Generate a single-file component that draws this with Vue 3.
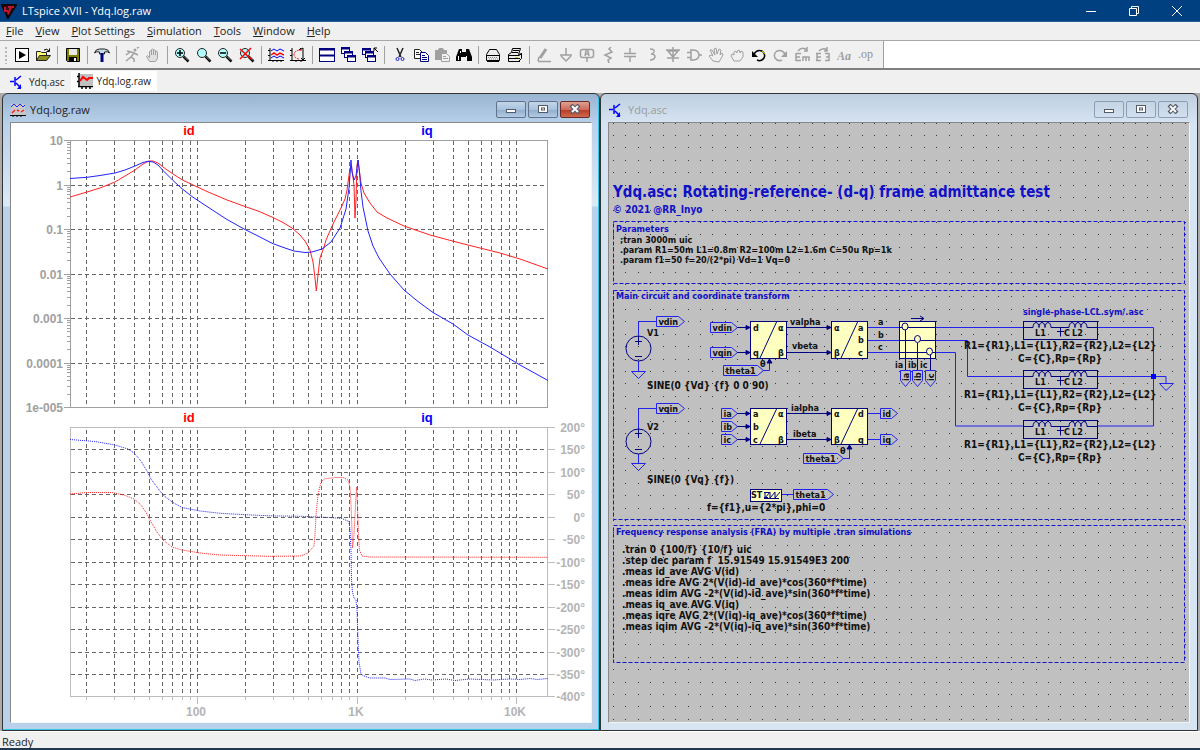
<template>
  <div class="app">
    <header class="titlebar">
      <svg class="logo" width="16" height="16" viewBox="0 0 16 16">
        <path d="M1 2h14l-8 13z" fill="#3a0b12" />
        <path d="M1 2h14l-8 13z" fill="none" stroke="#120608" stroke-width="2" />
        <path d="M4 4v4h3M7 4h6M10 4l-3 7" fill="none" stroke="#c0142c" stroke-width="2" />
      </svg>
      <h1>LTspice XVII - Ydq.log.raw</h1>
      <div class="sysBtns">
        <button aria-label="Minimize"><svg width="12" height="12"><path d="M1 6.5h10" /></svg></button>
        <button aria-label="Restore"><svg width="12" height="12"><path d="M1.5 3.5h7v7h-7zM3.5 3v-1.5h7v7h-1.5" /></svg></button>
        <button aria-label="Close"><svg width="12" height="12"><path d="M1 1l10 10M11 1l-10 10" /></svg></button>
      </div>
    </header>

    <nav class="menu">
      <button v-for="m in menus" :key="m"><u>{{ m[0] }}</u>{{ m.slice(1) }}</button>
    </nav>

    <div class="toolbarRow">
      <div class="toolbar">
        <template v-for="(group, gi) in toolGroups" :key="gi">
          <span v-if="gi" class="sep"></span>
          <button v-for="t in group" :key="t" :aria-label="t">
            <svg width="16" height="16" viewBox="0 0 16 16" fill="none" v-html="icons[t]"></svg>
          </button>
        </template>
      </div>
    </div>

    <div class="tabs">
      <button class="tab">
        <svg width="16" height="16" viewBox="0 0 16 16" fill="none" v-html="icons.transistor"></svg>Ydq.asc
      </button>
      <button class="tab active">
        <svg width="16" height="16" viewBox="0 0 16 16" fill="none" v-html="icons.wave"></svg>Ydq.log.raw
      </button>
    </div>

    <main class="mdi">
      <section class="win focused">
        <div class="winTitle">
          <svg width="16" height="16" viewBox="0 0 16 16" fill="none" v-html="icons.plot"></svg>
          <h2>Ydq.log.raw</h2>
          <div class="winBtns">
            <button v-for="b in winButtons" :key="b" :class="b" :aria-label="b">
              <svg width="12" height="10" viewBox="0 0 12 10" v-html="icons[b]"></svg>
            </button>
          </div>
        </div>
        <div class="client">
          <svg class="canvas plot" viewBox="11 123 580 599" preserveAspectRatio="xMinYMin meet">
            <path class="grid" :d="gridPath" />
            <path class="axis" :d="magTicks" />
            <path class="axis soft" :d="phaseTicks" />
            <rect class="axis" x="70.5" y="140.5" width="477" height="267" />
            <rect class="axis soft" x="70.5" y="427.5" width="477" height="269" />
            <g class="axisText" text-anchor="end">
              <text v-for="(l, i) in magLabels" :key="l" x="63" :y="magY(i) + 4">{{ l }}</text>
              <text v-for="(l, i) in phaseLabels" :key="l" class="softText" x="585" :y="phaseY(i) + 4">{{ l }}</text>
            </g>
            <g class="axisText softText" text-anchor="middle">
              <text x="196" y="716">100</text>
              <text x="356" y="716">1K</text>
              <text x="515" y="716">10K</text>
            </g>
            <g class="traceText" text-anchor="middle">
              <text x="189" y="135" fill="#f00">id</text>
              <text x="427" y="135" fill="#00f">iq</text>
              <text x="189" y="422" fill="#f00">id</text>
              <text x="427" y="422" fill="#00f">iq</text>
            </g>
            <polyline class="trace red" :points="magId" />
            <polyline class="trace blue" :points="magIq" />
            <polyline class="trace red dotted" :points="phaseId" />
            <polyline class="trace blue dotted" :points="phaseIq" />
          </svg>
        </div>
      </section>

      <section class="win">
        <div class="winTitle">
          <svg width="16" height="16" viewBox="0 0 16 16" fill="none" v-html="icons.transistor"></svg>
          <h2>Ydq.asc</h2>
          <div class="winBtns">
            <button v-for="b in winButtons" :key="b" :class="b" :aria-label="b">
              <svg width="12" height="10" viewBox="0 0 12 10" v-html="icons[b]"></svg>
            </button>
          </div>
        </div>
        <div class="client schematicClient">
          <svg class="canvas schematic" viewBox="609 123 580 599" preserveAspectRatio="xMinYMin meet">
            <path class="dots" :d="dotGrid" />

            <g class="frameBox">
              <rect x="613.5" y="221.5" width="571" height="62" />
              <rect x="613.5" y="290.5" width="571" height="229" />
              <rect x="613.5" y="525.5" width="571" height="137" />
            </g>

            <g class="note">
              <text class="big" x="613" y="197">Ydq.asc: Rotating-reference- (d-q) frame admittance test</text>
              <text class="mid" x="613" y="213">© 2021 @RR_Inyo</text>
              <text x="616" y="232">Parameters</text>
              <text x="616" y="299">Main circuit and coordinate transform</text>
              <text x="616" y="535">Frequency response analysis (FRA) by multiple .tran simulations</text>
              <text x="1023" y="315">single-phase-LCL.sym/.asc</text>
            </g>

            <!-- wires -->
            <path class="wire" d="M656 321.5h-17.5v14M656 408.5h-17.5v21
              M638.5 361v10M638.5 454v9M631.5 371.5h14l-7 7zM631.5 463.5h14l-7 7z
              M763 370.5h6.5v-11M843 458.5h6.5v-13
              M868 327.5h155M868 340.5h99.5v36h55.5M868 352.5h87.5v73.5h67.5
              M1098 327.5h55.5v98.5h-55.5M1098 376.5h68v7M1159.5 383.5h14l-7.5 7z
              M868 413.5h12M868 439.5h12M782 494.5h11" />
            <rect x="1151" y="374" width="5" height="5" fill="#00f" />

            <!-- symbols -->
            <g class="sym">
              <circle cx="638.5" cy="348.5" r="12.5" />
              <circle cx="638.5" cy="441.5" r="12.5" />
              <path d="M638.5 336v9M635 341.5h7M635 356.5h7M638.5 429v9M635 433.5h7M635 449.5h7" />
            </g>
            <g class="sym filled">
              <rect x="750.5" y="321.5" width="36" height="37" />
              <rect x="831.5" y="321.5" width="36" height="37" />
              <rect x="899.5" y="321.5" width="36" height="37" />
              <rect x="750.5" y="408.5" width="36" height="36" />
              <rect x="831.5" y="408.5" width="36" height="36" />
              <rect x="750.5" y="489.5" width="31" height="12" />
            </g>
            <g class="sym">
              <path d="M760 358l17-37M841 358l17-37M760 444l17-36M841 444l17-36" />
              <path d="M787 327.5h44M787 352.5h44M787 413.5h44M787 439.5h44" />
              <path d="M737 327.5h13M737 352.5h13M737 413.5h13M737 426.5h13M737 439.5h13" />
              <path d="M899 327.5h37M899 340.5h37M899 352.5h37M905.5 330v41M917.5 343v28M930.5 355v16" />
              <g fill="#ffffc0">
                <ellipse cx="905" cy="326.5" rx="3" ry="3.5" />
                <ellipse cx="917.5" cy="339" rx="3" ry="3.5" />
                <ellipse cx="929.5" cy="351.5" rx="3" ry="3.5" />
              </g>
              <path d="M911 318.5h12M920 316l4 2.5-4 2.5" />
              <path d="M764 492.5h5M764 497.5h4M765 498v-6M765 498l5-6v6l5-6v6l5-6M764 498.5h15" />
              <path d="M767 363l2.5-4 2.5 4zM847 449l2.5-4 2.5 4z" fill="#000080" />
              <path v-for="a in arrows" :key="a.join()" :d="`M${a[0] - 4} ${a[1] - 2}l4 2-4 2z`" fill="#000080" />
            </g>

            <g v-for="y in lclRows" :key="y" class="sym">
              <rect x="1023.5" :y="y - 6" width="74" height="18" />
              <path :d="`M1023 ${y}h10${coil}h18${coil}h10M1060.5 ${y}v9M1057 ${y + 4}h7`" />
            </g>
            <g v-for="y in lclRows" :key="'t' + y" class="label">
              <text x="1035" :y="y + 8">L1</text>
              <text x="1064" :y="y + 8">C</text>
              <text x="1072" :y="y + 8">L2</text>
              <text class="value" x="964" :y="y + 21">R1={R1},L1={L1},R2={R2},L2={L2}</text>
              <text class="value" x="1018" :y="y + 34">C={C},Rp={Rp}</text>
            </g>

            <!-- net flags -->
            <path v-for="(f, i) in flags" :key="i" class="wire" :d="flagPath(f)" />
            <path class="wire" d="M900.5 370.5h10v10l-5 6-5-6zM912.5 370.5h10v10l-5 6-5-6zM925.5 370.5h10v10l-5 6-5-6z" />
            <g class="label">
              <text v-for="(f, i) in flags" :key="i" :x="f.x + 2" :y="f.y + 3">{{ f.name }}</text>
              <text v-for="n in downFlags" :key="n.name" :transform="`translate(${n.x} 381) rotate(-90)`">{{ n.name }}</text>
              <text v-for="(l, i) in labels" :key="'l' + i" :x="l[0]" :y="l[1]">{{ l[2] }}</text>
              <text v-for="(p, i) in params" :key="p" x="620" :y="243 + i * 10">{{ p }}</text>
              <text v-for="v in values" :key="v[2]" class="value" :x="v[0]" :y="v[1]">{{ v[2] }}</text>
              <text v-for="(d, i) in directives" :key="d" class="value" x="622" :y="553 + i * 11">{{ d }}</text>
            </g>
          </svg>
        </div>
      </section>
    </main>

    <footer class="status">Ready</footer>
  </div>
</template>

<script setup>
const menus = ['File', 'View', 'Plot Settings', 'Simulation', 'Tools', 'Window', 'Help']

const winButtons = ['minimize', 'maximize', 'close']

const toolGroups = [
  ['run', 'open'],
  ['save'],
  ['hammer'],
  ['runner', 'halt'],
  ['zoomIn', 'zoomArea', 'zoomOut', 'zoomFit'],
  ['autorange', 'axes'],
  ['tile', 'cascade', 'closeAll'],
  ['cut', 'copy', 'paste', 'find'],
  ['printSetup', 'print'],
  ['pencil', 'ground', 'netLabel', 'resistor', 'capacitor', 'inductor', 'diode', 'gate',
    'move', 'drag', 'undo', 'redo', 'rotate', 'mirror', 'textTool', 'opTool'],
]

// ====== ICONS ======
const g = 'stroke="#a0a0a0" stroke-width="1.5"'
const lens = (fill) =>
  `<circle cx="6" cy="6" r="4.5" fill="${fill}" stroke="#222"/><path d="M9.5 9.5l5 5" stroke="#000" stroke-width="2.5"/><path d="M10 9.5l4 4" stroke="#888"/>`
const miniWin = (x, y) =>
  `<rect x="${x + 0.5}" y="${y + 0.5}" width="8" height="6" fill="#fff" stroke="#000080"/><path d="M${x} ${y + 1.5}h9" stroke="#000080" stroke-width="2"/>`

const icons = {
  run: '<rect x="1.5" y="1.5" width="13" height="13" fill="#fff" stroke="#000"/><path d="M5 4l7 4-7 4z" fill="#000"/>',
  open: '<path d="M1.5 13.5v-9h4l1 1h5v3" fill="#ffff80" stroke="#222"/><path d="M1.5 13.5l3-5h11l-4 5z" fill="#909020" stroke="#222"/><path d="M9 3q3-2 5 1M14.5 1.5v3h-3" stroke="#000"/>',
  save: '<path d="M1.5 1.5h13v13h-12l-1-1z" fill="#808000" stroke="#000"/><rect x="4" y="2" width="8" height="6" fill="#e8e8e8"/><rect x="4" y="10" width="8" height="5" fill="#000"/><rect x="9" y="11" width="2" height="3" fill="#fff"/>',
  hammer: '<path d="M.5 6q1-4 5-4h5q4 0 5 4-2-2-5-1v2h-5v-2q-3-1-5 1z" fill="#c8dce8" stroke="#222"/><path d="M8 6v9" stroke="#000080" stroke-width="3"/>',
  runner: `<circle cx="11" cy="3" r="1.5" fill="#a0a0a0"/><path d="M3 4l4 1 3 1-3 4 3 2v3M7 10l-5 4M10 6l4 2M13 1l2-1M6 5L2 8" ${g}/>`,
  halt: '<path d="M4.5 14.5l-3-5 1-1 2 2v-6q1-1 2 0v-2q1-1 2 0v1q1-1 2 0v1q2-1 2 1v6l-2 3z" fill="#e0e0e0" stroke="#a0a0a0"/><path d="M6.5 4v4M8.5 3v5M10.5 4v4" stroke="#a0a0a0"/>',
  zoomIn: lens('#b0ffff') + '<path d="M3 6h6M6 3v6" stroke="#000" stroke-width="1.5"/>',
  zoomArea: lens('#b0ffff'),
  zoomOut: lens('#b0ffff') + '<path d="M3 6h6" stroke="#000" stroke-width="1.5"/>',
  zoomFit: lens('#b0ffff') + '<path d="M1 2l11 10M12 1l-11 11" stroke="#f00" stroke-width="1.5"/>',
  autorange: '<path d="M2 1v13M0 13.5h16M0 3.5h2M0 8.5h2M5 13v2M9 13v2M13 13v2" stroke="#000"/><path d="M3 4l3-2 3 2 3-2 4 2M3 11l3-2 3 2 3-2 4 2" stroke="#00f"/><path d="M3 8l3-2 3 2 3-2 4 2" stroke="#f00" stroke-width="1.5"/>',
  axes: '<path d="M2 1v13M0 13.5h16M0 3.5h2M0 8.5h2M6 13v2M11 13v2M9 3l4-2v11M9 3l2-2M11 11l2 2 2-2" stroke="#000"/><path d="M12 3q-8 0-8 5 1 4 6 4" stroke="#f00" stroke-dasharray="2 1"/>',
  tile: '<rect x=".5" y="1.5" width="15" height="13" fill="#fff" stroke="#000080"/><path d="M0 2.5h16M0 8.5h16" stroke="#000080" stroke-width="2"/>',
  cascade: miniWin(0, 0) + miniWin(3, 4) + miniWin(6, 8),
  closeAll: miniWin(0, 1) + miniWin(3, 4) + miniWin(5, 8) + '<path d="M12 4V1h3M12 1l4 4" stroke="#000"/>',
  cut: '<path d="M5 1l4 9M11 1l-4 9" stroke="#222" stroke-width="1.5"/><circle cx="5.5" cy="12" r="1.5" stroke="#2020c0"/><circle cx="10.5" cy="12" r="1.5" stroke="#2020c0"/>',
  copy: '<path d="M1.5 2.5h5l3 3v6h-8z" fill="#fff" stroke="#222"/><path d="M3 5.5h3M3 7.5h4" stroke="#222"/><path d="M7.5 5.5h5l3 3v6h-8z" fill="#fff" stroke="#000080"/><path d="M9 8.5h3M9 10.5h5M9 12.5h5" stroke="#000080"/>',
  paste: '<path d="M1 3h3l1-2h4l1 2h3v10h-12z" fill="#a0a0a0"/><path d="M7.5 6.5h5l3 3v5h-8z" fill="#f0f0f0" stroke="#a0a0a0"/><path d="M9 9.5h3M9 11.5h5" stroke="#a0a0a0"/>',
  find: '<path d="M3 2h3v3h4V2h3l3 8v4h-5v-4h-6v4H0v-4z" fill="#000"/><path d="M2.5 9v4M10.5 9v4M4.5 4v2" stroke="#fff"/>',
  printSetup: '<path d="M1.5 7.5l3-5h7l3 5v6h-13z" fill="#eee" stroke="#000"/><path d="M1 8.5h14M2 14.5h12" stroke="#000"/><path d="M3 10.5h10M4 12h9" stroke="#888" stroke-dasharray="1 1"/>',
  print: '<path d="M1.5 7.5l3-2 1-4h8l-2 6 3-1v5l-3 3h-10z" fill="#eee" stroke="#000"/><path d="M1 8.5h11l3-2M2 11.5h11M6 3.5h6M5 5.5h6M3 14.5h10" stroke="#000"/><path d="M8 10.5h3" stroke="#e0d000"/>',
  pencil: `<path d="M10 2l-6 9" stroke="#a0a0a0" stroke-width="3"/><path d="M2 14.5h13M2 14l1-4" ${g}/>`,
  ground: `<path d="M8 1v7M2 8h12M3 9l5 5 5-5" ${g}/>`,
  netLabel: `<rect x="1.5" y="2.5" width="13" height="8" rx="2" ${g}/><path d="M8 10v5M6 9l1-5h2l1 5M6 7h4" ${g}/>`,
  resistor: `<path d="M10 0L8 2l3 3-7 3 6 3-3 2 1 3" ${g}/>`,
  capacitor: `<path d="M8 1v5M2 6.5h12M2 9.5h12M8 10v5" ${g}/>`,
  inductor: `<path d="M6 2q5 0 4 3-1 2-3 2 4 0 4 3-1 3-5 3" ${g}/>`,
  diode: `<path d="M8 0v15M1 3h14M3 4h10l-5 6zM2 11h12" ${g}/>`,
  gate: `<path d="M5 3v10M1 5.5h4M1 10.5h4M4 3h4q5 1 5 5t-5 5H4M13 8h3" ${g}/>`,
  move: `<path d="M5 14l-4-5 2-1 2 1-3-6 2 0 3 5-1-6 2-1 1 6 2-5 2 1-1 5 2-2 1 2-4 7z" stroke="#a0a0a0"/>`,
  drag: `<path d="M5 14l-3-5 1-2 2 1v-3l1.5-1 1.5 2V4l2-1 1 3 1-2 2 1v5l-3 4z" stroke="#a0a0a0"/>`,
  undo: '<path d="M3 7q3-5 8-3 4 3 2 7-3 4-7 2" stroke="#000" stroke-width="1.5"/><path d="M1 4v6h6z" fill="#000"/><path d="M11 4l3 3" stroke="#c0b000"/>',
  redo: `<path d="M13 7q-3-5-8-3-4 3-2 7 3 4 7 2" ${g}/><path d="M15 4v6H9z" fill="#a0a0a0"/>`,
  rotate: `<path d="M2 6v8M2 6.5h5M2 10h4M2 13.5h5M9 14v-4h6v4M12 10v4M4 4q4-5 9-1M13 0v4h-3" ${g}/>`,
  mirror: `<path d="M2 6v8M1 6.5h5M2 10h4M1 13.5h5M14 6v8M10 6.5h4M11 10h3M10 13.5h4M4 4q4-4 8-1M12 0v4h-3" ${g}/>`,
  textTool: '<text x="0" y="13" font-family="Liberation Serif, serif" font-style="italic" font-weight="bold" font-size="12" fill="#a0a0a0">Aa</text>',
  opTool: '<text x="0" y="11" font-family="Liberation Serif, serif" font-size="12" fill="#909090">.op</text>',
  transistor: '<path d="M6 3v9M1 7.5h4M7 6l5-4M7 9l5 5" stroke="#00f" stroke-width="1.5"/><path d="M12 10v5H8z" fill="#00f"/>',
  wave: '<rect x="2" y="1" width="14" height="11" fill="#c0c0c0"/><path d="M2 0v14M1 13.5h15M0 3.5h2M0 8.5h2M5 13v3M9 13v3M13 13v3" stroke="#000" stroke-width="1.5"/><path d="M3 8l3-4 4 3 2-2h4" stroke="#f00" stroke-width="2"/>',
  plot: '<rect x="1" y="2" width="14" height="11" fill="#c8c8c8"/><path d="M1 5l3-3 3 3 3-3 3 3 2-2" stroke="#22f"/><path d="M2 11l3-3M7 8l2 1M11 10l3-2" stroke="#f22" stroke-width="1.5"/><path d="M0 13.5h16M3 13v2M7 13v2M11 13v2" stroke="#000"/>',
  minimize: '<rect x="1.5" y="5.5" width="9" height="3" fill="#fff" stroke="#555a68"/>',
  maximize: '<rect x="1.5" y="1.5" width="9" height="7" fill="#fff" stroke="#555a68"/><rect x="4.5" y="4" width="3" height="2" fill="#fff" stroke="#555a68"/>',
  close: '<path d="M2 1l8 8M10 1l-8 8" stroke="#555a68" stroke-width="4"/><path d="M3 2l6 6M9 2l-6 6" stroke="#fff" stroke-width="2"/>',
}

// ====== PLOT ======
const magLabels = ['10', '1', '0.1', '0.01', '0.001', '0.0001', '1e-005']
const phaseLabels = Array.from({ length: 13 }, (_, i) => `${200 - i * 50}°`)

const px = (v) => Math.round(v) + 0.5
const freqX = (f) => px(197 + 159.5 * Math.log10(f / 100))
const magY = (i) => px(140 + 44.5 * i)
const phaseY = (i) => px(427 + 22.45 * i)

const freqs = []
for (const decade of [10, 100, 1000, 10000]) {
  for (let k = 1; k < 10; k++) {
    const f = decade * k
    if (f > 16 && f < 15900) freqs.push(f)
  }
}

const gridPath = [
  ...freqs.map((f) => `M${freqX(f)} 141V407M${freqX(f)} 430V697`),
  ...[1, 2, 3, 4, 5].map((i) => `M71 ${magY(i)}H547`),
  ...Array.from({ length: 11 }, (_, i) => `M71 ${phaseY(i + 1)}H547`),
].join('')

const magTicks = magLabels
  .map((_, i) => {
    let d = `M64 ${magY(i)}h6`
    if (i < 6) {
      for (let k = 2; k < 10; k++) d += `M67 ${px(140 + 44.5 * (i + 1 - Math.log10(k)))}h3`
    }
    return d
  })
  .join('')

const phaseTicks =
  phaseLabels.map((_, i) => `M548 ${phaseY(i)}h7`).join('') +
  freqs.map((f) => `M${freqX(f)} 697v${[100, 1000, 10000].includes(f) ? 7 : 3}`).join('')

const magId =
  '70,197 87,192 100,188 115,182 125,176 135,170 143,164 149,161 153,161 158,163 163,167 173,174 182,179.7 192,184.5 207,191.5 227,200 245,206.5 258,211 273,217.5 283,222.5 292,228 300,235 305,241 310,250 313,262 315,278 316.3,291 318,275 320,258 324,247 326,240 333,224 341,208 345,199 347,190 350,168 351.5,166 354,185 355,218 356,200 357,165 358,160 359.5,172 361,183 364,193 370,203 377,212 387,218 404,226 430,235 460,243 500,253 520,259 548,269'
const magIq =
  '70,178.5 87,177.3 100,175.5 115,173 125,170 135,166 143,162.5 148,161.3 153,162 158,165 163,170.5 173,180.5 182,188.7 192,196.5 207,206.5 227,219.5 245,229.5 258,236 273,243.7 285,248 294,251 305,252.5 312,252 322,249 331,242 340,228 346,209 349,188 350.5,168 351,160 352,172 354,180 356,176 357,168 358,160 359.5,172 361,191 363,207 368,231 373,246 379,258 390,274 404,290 418,301.5 433,312.5 453,324 468,335 490,347 520,365 548,380.5'
const phaseId =
  '70,494 87,492.5 112,492.5 124,495 134,499 141,505 147,514 151,522 157,532 163,540 172,547 182,550 200,553 220,555 245,555.7 270,556.3 300,556 308,553 314,546 315,535 316,515 318,495 321,482 324,479 335,477.5 343,477.5 348,480 350,487 351,505 352,530 352.5,548 354,535 355,515 356.3,490 356.6,487 357.5,505 358.5,535 359.5,550 362,556 370,557 548,557.3'
const phaseIq =
  '70,439.5 95,441.5 115,445 128,449 134,453 141,461 147,471 151,479 157,487 163,495 172,502 182,507.5 200,511 220,513.3 245,514.7 270,515.8 300,516.3 330,517.5 342,518.5 349,521.5 350,530 351,550 351.5,580 352.5,592 354,598 356,600 357,610 358,640 359,662 361,674 364,676 370,678 385,678 390,679.5 410,679 415,680.5 424,679 432,680 446,679 455,680.5 470,679 493,680 510,679 520,679.5 530,678.5 537,679.5 548,678.5'

// ====== SCHEMATIC ======
const dotGrid = (() => {
  let d = ''
  for (let r = 0; r < 49; r++) {
    for (let c = 0; c < 47; c++) {
      d += `M${Math.round(613 + c * 12.43)} ${Math.round(122.6 + r * 12.42) + 0.5}h1`
    }
  }
  return d
})()

const lclRows = [327.5, 376.5, 426.5]
const coil = 'a3 5 0 0 1 6 0a3 5 0 0 1 6 0a3 5 0 0 1 6 0'

// w is the body length, the tip adds 6 more
const flags = [
  { name: 'vdin', x: 656.5, y: 321.5, w: 22 },
  { name: 'vqin', x: 656.5, y: 408.5, w: 22 },
  { name: 'vdin', x: 710.5, y: 327.5, w: 21 },
  { name: 'vqin', x: 710.5, y: 352.5, w: 21 },
  { name: 'theta1', x: 723.5, y: 370.5, w: 34 },
  { name: 'ia', x: 721.5, y: 413.5, w: 10 },
  { name: 'ib', x: 721.5, y: 426.5, w: 10 },
  { name: 'ic', x: 721.5, y: 439.5, w: 10 },
  { name: 'theta1', x: 803.5, y: 458.5, w: 34 },
  { name: 'id', x: 880.5, y: 413.5, w: 11 },
  { name: 'iq', x: 880.5, y: 439.5, w: 11 },
  { name: 'theta1', x: 793.5, y: 494.5, w: 34 },
]

function flagPath(f) {
  return `M${f.x} ${f.y - 5}h${f.w}l6 5-6 5h${-f.w}z`
}

const downFlags = [
  { name: 'ia', x: 909 },
  { name: 'ib', x: 921 },
  { name: 'ic', x: 934 },
]

const arrows = [
  [750, 327.5], [750, 352.5], [750, 413.5], [750, 426.5], [750, 439.5],
  [831, 327.5], [831, 352.5], [831, 413.5], [831, 439.5],
]

const labels = [
  [647, 336, 'V1'], [647, 430, 'V2'],
  [753, 331, 'd'], [778, 331, 'α'], [753, 356, 'q'], [778, 356, 'β'],
  [834, 331, 'α'], [858, 331, 'a'], [858, 343, 'b'], [834, 356, 'β'], [858, 356, 'c'],
  [753, 417, 'a'], [753, 430, 'b'], [753, 443, 'c'], [778, 417, 'α'], [778, 443, 'β'],
  [834, 417, 'α'], [834, 443, 'β'], [858, 417, 'd'], [858, 443, 'q'],
  [790, 325, 'valpha'], [792, 349, 'vbeta'], [791, 411, 'ialpha'], [793, 437, 'ibeta'],
  [878, 325, 'a'], [878, 338, 'b'], [878, 350, 'c'],
  [895, 368, 'ia'], [908, 368, 'ib'], [920, 368, 'ic'],
  [760, 367, 'θ'], [840, 454, 'θ'], [751, 498, 'ST'],
]

const values = [
  [647, 389, 'SINE(0 {Vd} {f} 0 0 90)'],
  [647, 483, 'SINE(0 {Vq} {f})'],
  [707, 511, 'f={f1},u={2*pi},phi=0'],
]

const params = [
  ';tran 3000m uic',
  '.param R1=50m L1=0.8m R2=100m L2=1.6m C=50u Rp=1k',
  '.param f1=50 f=20/(2*pi) Vd=1 Vq=0',
]

const directives = [
  '.tran 0 {100/f} {10/f} uic',
  '.step dec param f  15.91549 15.91549E3 200',
  '.meas id_ave AVG V(id)',
  '.meas idre AVG 2*(V(id)-id_ave)*cos(360*f*time)',
  '.meas idim AVG -2*(V(id)-id_ave)*sin(360*f*time)',
  '.meas iq_ave AVG V(iq)',
  '.meas iqre AVG 2*(V(iq)-iq_ave)*cos(360*f*time)',
  '.meas iqim AVG -2*(V(iq)-iq_ave)*sin(360*f*time)',
]
</script>

<style>
body { margin: 0; }
</style>

<style scoped>
* { box-sizing: border-box; }

.app {
  min-height: 100vh;
  display: flex;
  flex-direction: column;
  background: #f0f0f0;
  color: #222;
  font-family: "Open Sans", "Noto Sans", sans-serif;
  font-size: 11px;
}

button {
  appearance: none;
  border: 0;
  padding: 0;
  background: none;
  color: inherit;
  font: inherit;
}

h1, h2 { margin: 0; font-weight: 400; }

.titlebar {
  height: 22px;
  display: flex;
  align-items: center;
  gap: 5px;
  padding-left: 1px;
  background: #004080;
  border-bottom: 1px solid #2a5f96;
  color: #fff;
}
.titlebar h1 { flex: 1; font-size: 11px; line-height: 20px; }

.sysBtns { display: flex; padding-right: 2px; }
.sysBtns button { width: 43px; height: 20px; display: grid; place-items: center; }
.sysBtns path { fill: none; stroke: #fff; }

.menu {
  height: 19px;
  display: flex;
  gap: 12px;
  padding: 0 6px;
  border-bottom: 1px solid #a8a8a8;
  line-height: 18px;
}

.toolbarRow {
  height: 29px;
  display: flex;
  background: #fff;
  border-bottom: 2px solid #808080;
}
.toolbar {
  width: 884px;
  display: flex;
  align-items: center;
  padding: 0 6px 0 8px;
  background: #f0f0f0;
  border-right: 1px solid #a0a0a0;
}
.toolbar::before {
  content: "";
  width: 4px;
  height: 18px;
  background: radial-gradient(circle, #b8b8b8 1px, transparent 1px) 0 0 / 4px 4px;
  margin-left: -4px;
  margin-right: 3px;
}
.toolbar button { flex: 1; height: 24px; display: grid; place-items: center; }
.sep { width: 8px; height: 18px; display: grid; place-items: center; }
.sep::before { content: ""; width: 1px; height: 18px; background: #a0a0a0; }

.tabs { height: 23px; display: flex; gap: 2px; padding: 1px 5px 2px; }
.tab {
  height: 20px;
  display: flex;
  align-items: center;
  gap: 4px;
  padding: 2px 4px 0;
  font-size: 10px;
}
.tab.active { background: #fff; padding: 0 6px; }

.mdi {
  flex: 1;
  display: grid;
  grid-template-columns: 1fr 1fr;
  padding: 0 2px;
  background: #ababab;
}

.win {
  min-width: 0;
  display: flex;
  flex-direction: column;
  border: 1px solid #333;
  border-radius: 6px 6px 0 0;
  padding: 0 7px 7px;
  background: linear-gradient(180deg, #becfdf 0, #d7e4f2 30px);
}
.win.focused {
  background: linear-gradient(180deg, #99b4d1 0, #b9d1ea 30px, #dce9f7 112px, #b9d1ea 113px);
  box-shadow: inset -1px -1px 0 #30c8e8;
}

.winTitle {
  height: 28px;
  display: flex;
  align-items: center;
  gap: 4px;
  padding: 4px 2px 0 0;
}
.winTitle h2 { flex: 1; font-size: 11px; line-height: 16px; color: #9a9da0; }
.focused .winTitle h2 { color: #222; }

.winBtns { display: flex; gap: 2px; padding-bottom: 2px; }
.winBtns button {
  width: 30px;
  height: 17px;
  display: grid;
  place-items: center;
  border: 1px solid #8e9cb8;
  border-radius: 2px;
}
.focused .winBtns button {
  border-color: #60728c;
  background: linear-gradient(180deg, #c2d6ea 0, #a8c2dc 50%, #8faccb 51%, #b2cbe4 100%);
}
.focused .winBtns button.close {
  border-color: #6b2a2a;
  background: linear-gradient(180deg, #e0a090 0, #cc6c5a 50%, #b83a24 51%, #cc6a4c 100%);
}

.client {
  flex: 1;
  min-height: 0;
  border: 1px solid #888;
  border-right-color: #f4f4f4;
  border-bottom-color: #f4f4f4;
  background: #fff;
}
.schematicClient { background: #c0c0c0; }
.canvas { display: block; width: 100%; height: auto; }

.grid { stroke: #666; stroke-dasharray: 4 3; fill: none; }
.axis { stroke: #a0a0a0; fill: none; }
.axis.soft { stroke: #bcbcbc; }
.axisText { font: bold 12px "Liberation Sans", Arial, sans-serif; fill: #a0a0a0; }
.softText { fill: #b4b4b4; }
.traceText { font: bold 13px "Liberation Sans", Arial, sans-serif; }
.trace { fill: none; stroke-linejoin: round; }
.trace.red { stroke: #f22; }
.trace.blue { stroke: #22f; }
.trace.dotted { stroke-dasharray: 1 1; }

.schematic text { white-space: pre; }
.dots { stroke: #333; }
.frameBox { fill: none; stroke: #1414d2; stroke-dasharray: 4 2; }
.note { font: bold 9px "DejaVu Sans Condensed", Verdana, sans-serif; fill: #1010c8; }
.note .mid { font-size: 10px; }
.note .big { font-size: 15px; }
.label { font: bold 9px "DejaVu Sans Condensed", Verdana, sans-serif; fill: #111; }
.label .value { font-size: 10px; }
.wire { fill: none; stroke: #2222f0; }
.sym { fill: none; stroke: #000080; }
.sym.filled { fill: #ffffc0; }

.status {
  height: 19px;
  padding: 2px 2px 0;
  border-top: 1px solid #fff;
  border-bottom: 2px solid #22384f;
  font-size: 11px;
  line-height: 16px;
}
</style>
